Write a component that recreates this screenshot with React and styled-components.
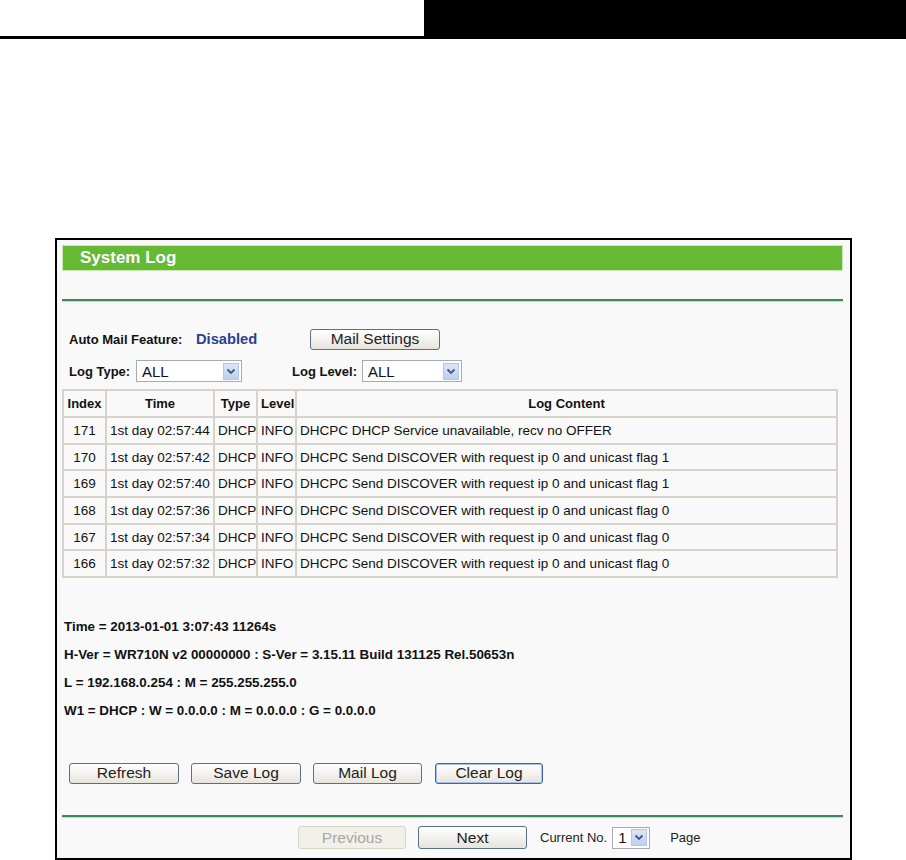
import React from "react";
import styled, { createGlobalStyle } from "styled-components";

const GlobalStyle = createGlobalStyle`
  body {
    margin: 0;
    background: #ffffff;
    font-family: "Liberation Sans", Arial, sans-serif;
  }
`;

const Page = styled.div`
  width: 906px;
  height: 860px;
  position: relative;
  overflow: hidden;
`;

const TopBar = styled.div`
  display: flex;
  height: 39px;
`;

const TopLeft = styled.div`
  width: 424px;
  border-bottom: 3px solid #000;
  box-sizing: border-box;
`;

const TopRight = styled.div`
  flex: 1;
  background: #000;
`;

const Panel = styled.div`
  margin: 199px 0 0 55px;
  width: 797px;
  height: 622px;
  box-sizing: border-box;
  border: 2px solid #000;
  padding: 5px 7px 0 5px;
  background: #f9f9f9;
  display: flex;
  flex-direction: column;
`;

const TitleBar = styled.div`
  height: 26px;
  background: #66b933;
  border: 1px solid #c9e8b6;
  box-sizing: border-box;
  padding-left: 17px;
  display: flex;
  align-items: center;
  color: #fff;
  font-weight: bold;
  font-size: 17px;
`;

const Rule = styled.div`
  height: 2px;
  background: #3b8a5b;
  border-bottom: 1px solid #c3dccb;
  margin-top: ${({ $top }) => $top}px;
`;

const Row = styled.div`
  display: flex;
  align-items: center;
  padding-left: 7px;
  margin-top: ${({ $top }) => $top}px;
  height: ${({ $h }) => $h || 20}px;
`;

const Label = styled.span`
  width: ${({ $w }) => $w}px;
  margin-left: ${({ $l }) => $l || 0}px;
  font-size: 13px;
  font-weight: bold;
  color: #111;
`;

const Status = styled.span`
  width: ${({ $w }) => $w}px;
  font-size: 14.7px;
  font-weight: bold;
  color: #2b3f8f;
`;

const Button = styled.button`
  width: ${({ $w }) => $w}px;
  height: ${({ $h }) => $h || 21}px;
  margin-right: ${({ $gap }) => $gap || 0}px;
  padding: 0;
  font-family: "Liberation Sans", Arial, sans-serif;
  font-size: 15.5px;
  color: ${({ disabled }) => (disabled ? "#a8a8a0" : "#222")};
  background: ${({ disabled }) =>
    disabled ? "#f1f0ea" : "linear-gradient(#ffffff, #f3f2ee 50%, #e6e4dc)"};
  border: 1px solid
    ${({ disabled, $focus }) =>
      disabled ? "#d8d5c6" : $focus ? "#3c64b4" : "#5a6f8c"};
  box-shadow: ${({ $focus }) => ($focus ? "inset 0 0 0 1px #a9c0ea" : "none")};
  border-radius: 3px;
  box-sizing: border-box;
`;

const SelectBox = styled.div`
  width: ${({ $w }) => $w}px;
  height: 22px;
  box-sizing: border-box;
  border: 1px solid #a5acb5;
  background: #fff;
  display: flex;
  align-items: center;
  justify-content: space-between;
  padding: 0 2px 0 5px;
  font-size: 15px;
  color: #111;
`;

const Arrow = styled.span`
  width: 16px;
  height: 17px;
  background: linear-gradient(#dbe6f8, #bcd0f0);
  border: 1px solid #b5c7e6;
  box-sizing: border-box;
  display: flex;
  align-items: center;
  justify-content: center;
`;

const Table = styled.table`
  margin-top: 7px;
  width: 776px;
  table-layout: fixed;
  border-collapse: collapse;
  font-size: 13.5px;
  color: #111;
  th,
  td {
    border: 2px solid #d6d3c9;
    height: 24.7px;
    padding: 0 3px;
    white-space: nowrap;
    overflow: hidden;
  }
  th {
    height: 25px;
    font-size: 13px;
    font-weight: bold;
    text-align: center;
  }
  td {
    text-align: left;
  }
  td.c {
    text-align: center;
  }
`;

const Info = styled.div`
  margin-top: ${({ $top }) => $top}px;
  padding-left: 2px;
  font-size: 13.4px;
  font-weight: bold;
  color: #111;
  line-height: 14px;
`;

const Pager = styled.div`
  display: flex;
  align-items: center;
  margin-top: 8px;
  padding-left: 236px;
  font-size: 13px;
  color: #222;
`;

const PagerText = styled.span`
  margin: 0 ${({ $r }) => $r || 0}px 0 ${({ $l }) => $l || 0}px;
`;

const Chevron = () => (
  <svg width="10" height="7" viewBox="0 0 10 7">
    <path d="M1.5 1.5 L5 5 L8.5 1.5" fill="none" stroke="#44577c" strokeWidth="1.8" />
  </svg>
);

const Select = ({ value, w }) => (
  <SelectBox $w={w}>
    <span>{value}</span>
    <Arrow>
      <Chevron />
    </Arrow>
  </SelectBox>
);

const logs = [
  [171, "02:57:44", "DHCPC DHCP Service unavailable, recv no OFFER"],
  [170, "02:57:42", "DHCPC Send DISCOVER with request ip 0 and unicast flag 1"],
  [169, "02:57:40", "DHCPC Send DISCOVER with request ip 0 and unicast flag 1"],
  [168, "02:57:36", "DHCPC Send DISCOVER with request ip 0 and unicast flag 0"],
  [167, "02:57:34", "DHCPC Send DISCOVER with request ip 0 and unicast flag 0"],
  [166, "02:57:32", "DHCPC Send DISCOVER with request ip 0 and unicast flag 0"],
];

export default function App() {
  return (
    <Page>
      <GlobalStyle />
      <TopBar>
        <TopLeft />
        <TopRight />
      </TopBar>
      <Panel>
        <TitleBar>System Log</TitleBar>
        <Rule $top={28} />
        <Row $top={27}>
          <Label $w={127}>Auto Mail Feature:</Label>
          <Status $w={114}>Disabled</Status>
          <Button $w={130}>Mail Settings</Button>
        </Row>
        <Row $top={11} $h={22}>
          <Label $w={67}>Log Type:</Label>
          <Select value="ALL" w={106} />
          <Label $w={70} $l={50}>
            Log Level:
          </Label>
          <Select value="ALL" w={100} />
        </Row>
        <Table>
          <colgroup>
            <col style={{ width: 43 }} />
            <col style={{ width: 108 }} />
            <col style={{ width: 43 }} />
            <col style={{ width: 39 }} />
            <col />
          </colgroup>
          <thead>
            <tr>
              <th>Index</th>
              <th>Time</th>
              <th>Type</th>
              <th>Level</th>
              <th>Log Content</th>
            </tr>
          </thead>
          <tbody>
            {logs.map(([i, t, msg]) => (
              <tr key={i}>
                <td className="c">{i}</td>
                <td>1st day {t}</td>
                <td>DHCP</td>
                <td>INFO</td>
                <td>{msg}</td>
              </tr>
            ))}
          </tbody>
        </Table>
        <Info $top={42}>Time = 2013-01-01 3:07:43 11264s</Info>
        <Info $top={14}>
          H-Ver = WR710N v2 00000000 : S-Ver = 3.15.11 Build 131125 Rel.50653n
        </Info>
        <Info $top={14}>L = 192.168.0.254 : M = 255.255.255.0</Info>
        <Info $top={14}>W1 = DHCP : W = 0.0.0.0 : M = 0.0.0.0 : G = 0.0.0.0</Info>
        <Row $top={44} $h={22}>
          <Button $w={110} $gap={12}>Refresh</Button>
          <Button $w={110} $gap={12}>Save Log</Button>
          <Button $w={109} $gap={13}>Mail Log</Button>
          <Button $w={108} $focus>
            Clear Log
          </Button>
        </Row>
        <Rule $top={31} />
        <Pager>
          <Button $w={108} $h={23} $gap={12} disabled>
            Previous
          </Button>
          <Button $w={109} $h={23}>Next</Button>
          <PagerText $l={13} $r={5}>Current No.</PagerText>
          <Select value="1" w={38} />
          <PagerText $l={20}>Page</PagerText>
        </Pager>
      </Panel>
    </Page>
  );
}
